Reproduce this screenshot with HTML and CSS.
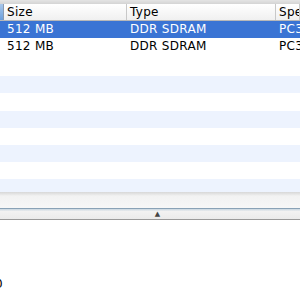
FILE: index.html
```html
<!DOCTYPE html>
<html lang="en">
<head>
<meta charset="utf-8">
<link rel="stylesheet" href="styles.css">
</head>
<body>
<div class="topbar"></div>
<div class="mem">
  <div class="row head">
    <div class="c c0"></div>
    <div class="c">Size</div>
    <div class="c">Type</div>
    <div class="c">Speed</div>
  </div>
  <div class="row sel">
    <div class="c c0"></div>
    <div class="c">512 MB</div>
    <div class="c">DDR SDRAM</div>
    <div class="c">PC3200</div>
  </div>
  <div class="row tall">
    <div class="c c0"></div>
    <div class="c">512 MB</div>
    <div class="c">DDR SDRAM</div>
    <div class="c">PC3200</div>
  </div>
  <div class="row gap"></div>
  <div class="row alt"></div>
  <div class="row tall"></div>
  <div class="row alt"></div>
  <div class="row"></div>
  <div class="row alt"></div>
  <div class="row"></div>
  <div class="row alt short"></div>
</div>
<div class="shade"></div>
<div class="splitter"><span class="grip">&#9650;</span></div>
<div class="lower">
  <div class="stub">0</div>
</div>
</body>
</html>
```

FILE: styles.css
```css
* {box-sizing: border-box;}
body {margin: 0; width: 300px; height: 300px; overflow: hidden; background: #fff; font-family: "DejaVu Sans", Verdana, sans-serif; font-size: 12px; color: #000;}
.topbar {height: 4px; background: linear-gradient(#e4e4e4, #d4d4d4);}
.mem {overflow: hidden;}
.row {display: grid; grid-template-columns: 4px 123px 149px 1fr; height: 17px; line-height: 17px; white-space: nowrap; letter-spacing: 0.3px;}
.row .c {padding-left: 3px; overflow: hidden;}
.row .c0 {padding: 0;}
.head {background: linear-gradient(#fff, #f0f0f0); border-bottom: 1px solid #b8b8b8;}
.head .c {border-right: 1px solid #c8c8c8; line-height: 16px;}
.head .c0 {background: linear-gradient(#a9c8ec, #6c9fdc); border-right: 1px solid #8a9ab0;}
.sel {background: #3a74d4; color: #fff;}
.alt {background: #edf3fe;}
.tall {height: 18px;}
.gap {height: 20px;}
.short {height: 13px;}
.shade {height: 16px; background: linear-gradient(#d7d7d7, #f2f2f2 25%, #f7f7f7);}
.splitter {height: 12px; border-top: 1px solid #8aa2b6; border-bottom: 1px solid #9a9a9a; background: linear-gradient(#c9d6e0, #f2f2f2 25%, #ebebeb); text-align: center; font-size: 7px; line-height: 10px; color: #444;}
.grip {display: inline-block; margin-left: 15px;}
.lower {padding-top: 57px;}
.stub {margin-left: -5px; font-size: 12px; line-height: 14px;}
```
